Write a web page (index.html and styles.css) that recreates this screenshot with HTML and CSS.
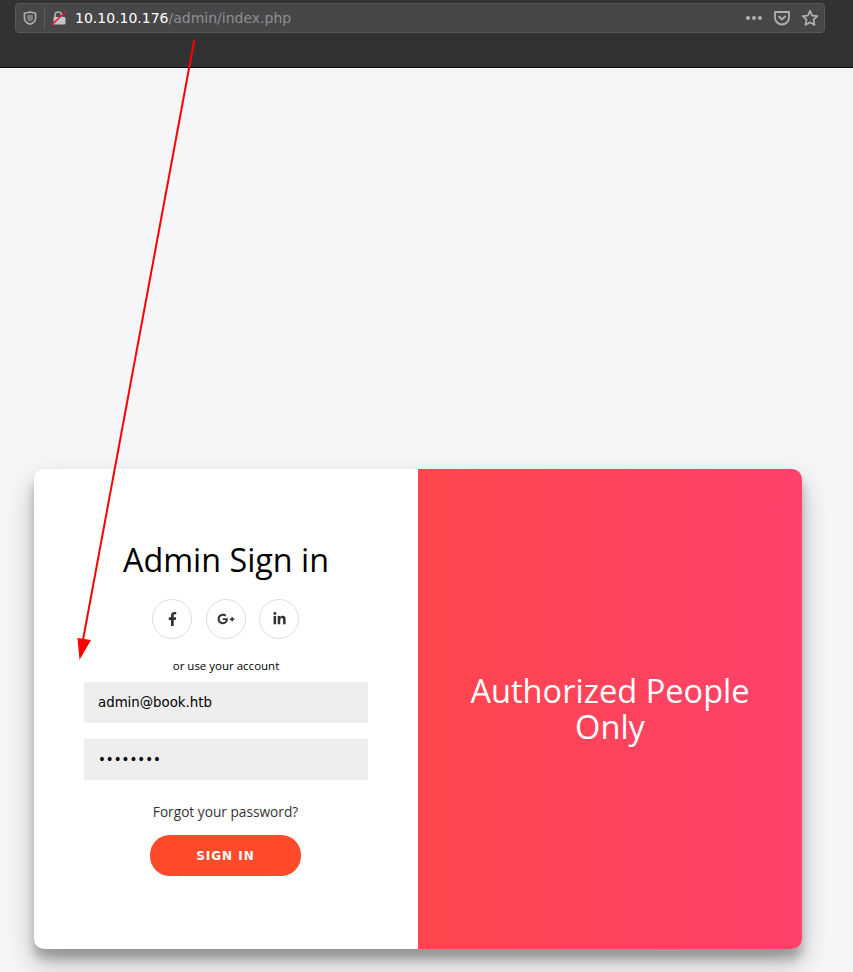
FILE: index.html
```html
<!DOCTYPE html>
<html lang="en">
<head>
  <meta charset="UTF-8" />
  <title>Admin Sign in</title>
  <link rel="stylesheet" href="styles.css">
</head>
<body>
  <div class="toolbar">
    <div class="urlbar">
      <svg class="ic-shield" viewBox="0 0 14 14" width="14" height="14">
        <path d="M7 1 L12.6 2.3 V6.8 C12.6 10 10 12.3 7 13.3 C4 12.3 1.4 10 1.4 6.8 V2.3 Z" fill="none" stroke="#b1b1b3" stroke-width="1.6"/>
        <path d="M7 3.5 L10 4.2 V7 C10 8.8 8.7 10 7 10.7 C5.3 10 4 8.8 4 7 V4.2 Z" fill="#7f7f81"/>
      </svg>
      <span class="sep"></span>
      <svg class="ic-lock" viewBox="0 0 16 16" width="16" height="16">
        <path d="M4 7 V5 C4 1 10.5 1 10.5 5 V7" fill="none" stroke="#b1b1b3" stroke-width="1.7"/>
        <rect x="2.5" y="7" width="12" height="7.5" rx="1" fill="#c4c4c6"/>
        <path d="M1 14.6 L15 1.5" stroke="#e5183f" stroke-width="1.6"/>
      </svg>
      <span class="url"><span class="host">10.10.10.176</span>/admin/index.php</span>
      <span class="dots"><i></i><i></i><i></i></span>
      <svg class="ic-pocket" viewBox="0 0 18 16" width="18" height="16">
        <path d="M2 2 H16 V7.5 C16 11.5 12.5 14.5 9 14.5 C5.5 14.5 2 11.5 2 7.5 Z" fill="none" stroke="#b1b1b3" stroke-width="1.8" stroke-linejoin="round"/>
        <path d="M6 6.5 L9 9.5 L12 6.5" fill="none" stroke="#b1b1b3" stroke-width="1.8" stroke-linecap="round"/>
      </svg>
      <svg class="ic-star" viewBox="0 0 18 18" width="18" height="18">
        <path d="M9 1.8 L11.2 6.6 L16.3 7.2 L12.5 10.7 L13.5 15.9 L9 13.3 L4.5 15.9 L5.5 10.7 L1.7 7.2 L6.8 6.6 Z" fill="none" stroke="#b1b1b3" stroke-width="1.7" stroke-linejoin="round"/>
      </svg>
    </div>
  </div>

  <div class="page">
    <div class="card">
      <form class="signin">
        <h1>Admin Sign in</h1>
        <div class="social">
          <a class="social-btn">
            <svg viewBox="0 0 320 512" width="9" height="14"><path d="M279.14 288l14.22-92.66h-88.91v-60.13c0-25.35 12.42-50.06 52.24-50.06h40.42V6.26S260.43 0 225.36 0c-73.22 0-121.08 44.38-121.08 124.72v70.62H22.89V288h81.39v224h100.17V288z"/></svg>
          </a>
          <a class="social-btn">
            <svg viewBox="0 0 640 512" width="18" height="14"><path d="M386.061 228.496c1.834 9.692 3.143 19.384 3.143 31.956C389.204 370.205 315.599 448 204.8 448c-106.084 0-192-85.915-192-192s85.916-192 192-192c51.864 0 95.083 18.859 128.611 50.292l-52.126 50.03c-14.145-13.621-39.028-29.599-76.485-29.599-65.484 0-118.92 54.221-118.92 121.277 0 67.056 53.436 121.277 118.92 121.277 75.961 0 104.513-54.745 108.965-82.773H204.8v-66.009h181.261zm185.406 6.437V179.2h-56.001v55.733h-55.733v56.001h55.733v55.733h56.001v-55.733H627.2v-56.001h-55.733z"/></svg>
          </a>
          <a class="social-btn">
            <svg viewBox="0 0 448 512" width="13" height="14"><path d="M100.28 448H7.4V148.9h92.88zM53.79 108.1C24.09 108.1 0 83.5 0 53.8a53.79 53.79 0 0 1 107.58 0c0 29.7-24.1 54.3-53.79 54.3zM447.9 448h-92.68V302.4c0-34.7-.7-79.2-48.29-79.2-48.29 0-55.69 37.7-55.69 76.7V448h-92.78V148.9h89.08v40.8h1.3c12.4-23.5 42.69-48.3 87.88-48.3 94 0 111.28 61.9 111.28 142.3V448z"/></svg>
          </a>
        </div>
        <span class="hint">or use your account</span>
        <input class="field" type="email" value="admin@book.htb" />
        <input class="field" type="password" value="password" />
        <a class="forgot">Forgot your password?</a>
        <button class="submit" type="button">Sign In</button>
      </form>
      <div class="overlay">
        <h2>Authorized People Only</h2>
      </div>
    </div>
  </div>

  <svg class="arrow" viewBox="0 0 853 972" width="853" height="972">
    <line x1="194.3" y1="40" x2="83" y2="640" stroke="#ff0000" stroke-width="2"/>
    <polygon points="79.5,660 77.5,638 91,640" fill="#ff0000"/>
  </svg>
</body>
</html>
```

FILE: styles.css
```css
* {
  box-sizing: border-box;
}

body {
  margin: 0;
  height: 972px;
  overflow: hidden;
  background: #f6f5f7;
  font-family: "Open Sans", "Noto Sans", sans-serif;
  color: #333;
}

.toolbar {
  height: 68px;
  padding: 3px 28px 0 15px;
  background: #323234;
  border-bottom: 1px solid #0c0c0d;
}

.urlbar {
  height: 30px;
  display: flex;
  align-items: center;
  padding: 0 5px 0 7px;
  background: #474749;
  border: 1px solid #58585a;
  border-radius: 4px;
}

.sep {
  width: 1px;
  height: 22px;
  margin: 0 6px 0 7px;
  background: #5f5f61;
}

.url {
  margin-left: 8px;
  flex: 1;
  font-family: "DejaVu Sans", sans-serif;
  font-size: 14px;
  color: #8f8f91;
}

.host {
  color: #fff;
}

.dots {
  display: flex;
  gap: 2px;
  margin-right: 11px;
}

.dots i {
  width: 4px;
  height: 4px;
  border-radius: 50%;
  background: #b1b1b3;
}

.ic-pocket {
  margin-right: 10px;
}

.page {
  padding: 401px 0 0 34px;
}

.card {
  width: 768px;
  height: 480px;
  display: flex;
  background: #fff;
  border-radius: 10px;
  overflow: hidden;
  box-shadow: 0 14px 28px rgba(0,0,0,0.25), 0 10px 10px rgba(0,0,0,0.22);
}

.signin {
  width: 384px;
  padding: 68px 50px 0;
  display: flex;
  flex-direction: column;
  align-items: center;
  text-align: center;
}

h1 {
  margin: 0 0 18px;
  font-size: 32.3px;
  line-height: 44px;
  font-weight: 400;
  color: #000;
}

.social {
  display: flex;
  gap: 13.5px;
  margin-right: 1px;
  margin-bottom: 19px;
}

.social-btn {
  width: 40px;
  height: 40px;
  display: flex;
  align-items: center;
  justify-content: center;
  border: 1px solid #ddd;
  border-radius: 50%;
}

.social-btn svg {
  fill: #333;
}

.hint {
  font-size: 11.5px;
  line-height: 16px;
  color: #000;
  margin-bottom: 8px;
}

.field {
  width: 100%;
  height: 41px;
  margin-bottom: 16px;
  padding: 0 14px;
  border: none;
  background: #eee;
  font-family: "DejaVu Sans", sans-serif;
  font-size: 13.33px;
  color: #000;
}

.forgot {
  margin: 6px 1px 14px 0;
  font-size: 13.7px;
  line-height: 19px;
}

.submit {
  width: 151px;
  height: 41px;
  margin-right: 1px;
  border: none;
  border-radius: 20px;
  background: #ff4b2b;
  color: #fff;
  font-family: "DejaVu Sans", sans-serif;
  font-size: 12px;
  font-weight: bold;
  letter-spacing: 1px;
  text-transform: uppercase;
}

.overlay {
  width: 384px;
  padding: 0 40px;
  display: flex;
  align-items: center;
  justify-content: center;
  text-align: center;
  background: linear-gradient(to right, #ff464c, #ff416c);
  color: #fff;
}

h2 {
  margin: 0;
  font-size: 32.6px;
  line-height: 36px;
  font-weight: 400;
}

.arrow {
  position: absolute;
  top: 0;
  left: 0;
  pointer-events: none;
}
```
